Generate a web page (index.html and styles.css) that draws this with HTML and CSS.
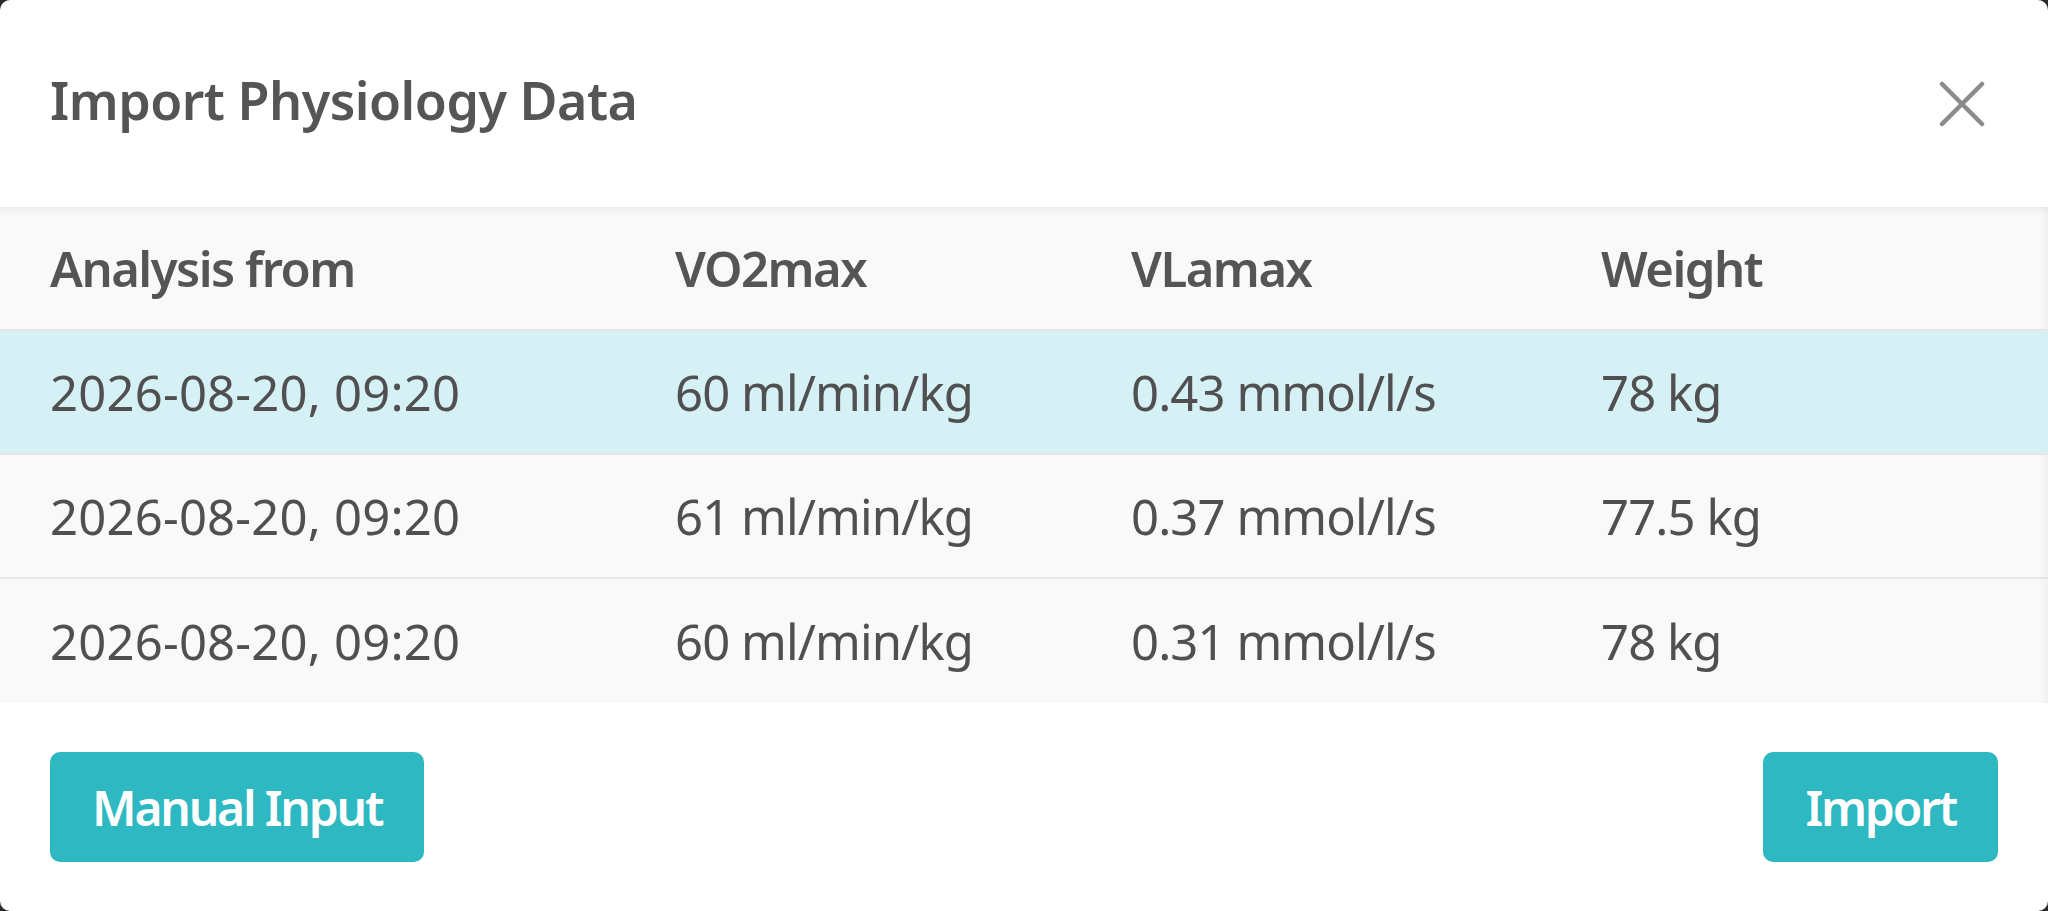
FILE: index.html
```html
<!DOCTYPE html>
<html lang="en">
<head>
<meta charset="utf-8">
<title>Import Physiology Data</title>
<link rel="stylesheet" href="styles.css">
</head>
<body>
<div class="dialog">
  <header class="dialog-header">
    <h1 class="dialog-title">Import Physiology Data</h1>
    <button class="close-btn" aria-label="Close">
      <svg viewBox="0 0 46 46" width="46" height="46"><path d="M3 3 L43 43 M43 3 L3 43" stroke="#8a8a8a" stroke-width="4.5" stroke-linecap="round" fill="none"/></svg>
    </button>
  </header>
  <div class="table-wrap">
    <div class="row head">
      <div class="cell">Analysis from</div>
      <div class="cell">VO2max</div>
      <div class="cell">VLamax</div>
      <div class="cell">Weight</div>
    </div>
    <div class="row selected">
      <div class="cell date">2026-08-20, 09:20</div>
      <div class="cell">60 ml/min/kg</div>
      <div class="cell">0.43 mmol/l/s</div>
      <div class="cell">78 kg</div>
    </div>
    <div class="row">
      <div class="cell date">2026-08-20, 09:20</div>
      <div class="cell">61 ml/min/kg</div>
      <div class="cell">0.37 mmol/l/s</div>
      <div class="cell">77.5 kg</div>
    </div>
    <div class="row last">
      <div class="cell date">2026-08-20, 09:20</div>
      <div class="cell">60 ml/min/kg</div>
      <div class="cell">0.31 mmol/l/s</div>
      <div class="cell">78 kg</div>
    </div>
  </div>
  <footer class="dialog-footer">
    <button class="btn">Manual Input</button>
    <button class="btn">Import</button>
  </footer>
</div>
</body>
</html>
```
FILE: styles.css
```css
html, body {
  margin: 0;
  padding: 0;
  background: #2a2a2a;
}
body {
  width: 2048px;
  height: 911px;
  font-family: "Noto Sans", "Open Sans", sans-serif;
  color: #505050;
}
.dialog {
  width: 2048px;
  height: 911px;
  background: #ffffff;
  border-radius: 10px;
  overflow: hidden;
  display: flex;
  flex-direction: column;
}
.dialog-header {
  height: 207px;
  box-sizing: border-box;
  padding: 0 63px 0 50px;
  display: flex;
  align-items: center;
  justify-content: space-between;
}
.dialog-title {
  margin: 0 0 8px 0;
  font-size: 52px;
  font-weight: 600;
  color: #555555;
  letter-spacing: -0.5px;
}
.close-btn {
  border: 0;
  background: none;
  padding: 0;
  width: 46px;
  height: 46px;
  display: flex;
  cursor: pointer;
}
.table-wrap {
  background: #f9f9f9;
  box-shadow: inset 0 9px 9px -7px rgba(0,0,0,0.07), inset -9px 0 9px -7px rgba(0,0,0,0.05);
}
.row {
  display: grid;
  grid-template-columns: 625px 456px 470px 1fr;
  padding-left: 50px;
  height: 124px;
  box-sizing: border-box;
  border-bottom: 2px solid #e6e6e6;
  align-items: center;
  font-size: 49px;
}
.row.last {
  border-bottom: 0;
}
.row.head .cell {
  font-weight: 600;
  color: #555555;
  letter-spacing: -1.5px;
}
.row.selected {
  background: #d5f1f5;
}
.cell {
  white-space: nowrap;
  letter-spacing: -0.9px;
}
.cell.date {
  letter-spacing: 0.2px;
}
.dialog-footer {
  flex: 1;
  display: flex;
  align-items: center;
  justify-content: space-between;
  padding: 0 50px;
}
.btn {
  height: 110px;
  border: 0;
  border-radius: 10px;
  background: #2eb8c1;
  color: #ffffff;
  font-family: "Noto Sans", "Open Sans", sans-serif;
  font-size: 48px;
  font-weight: 600;
  padding: 0 42px;
  letter-spacing: -2.2px;
  cursor: pointer;
}
```
